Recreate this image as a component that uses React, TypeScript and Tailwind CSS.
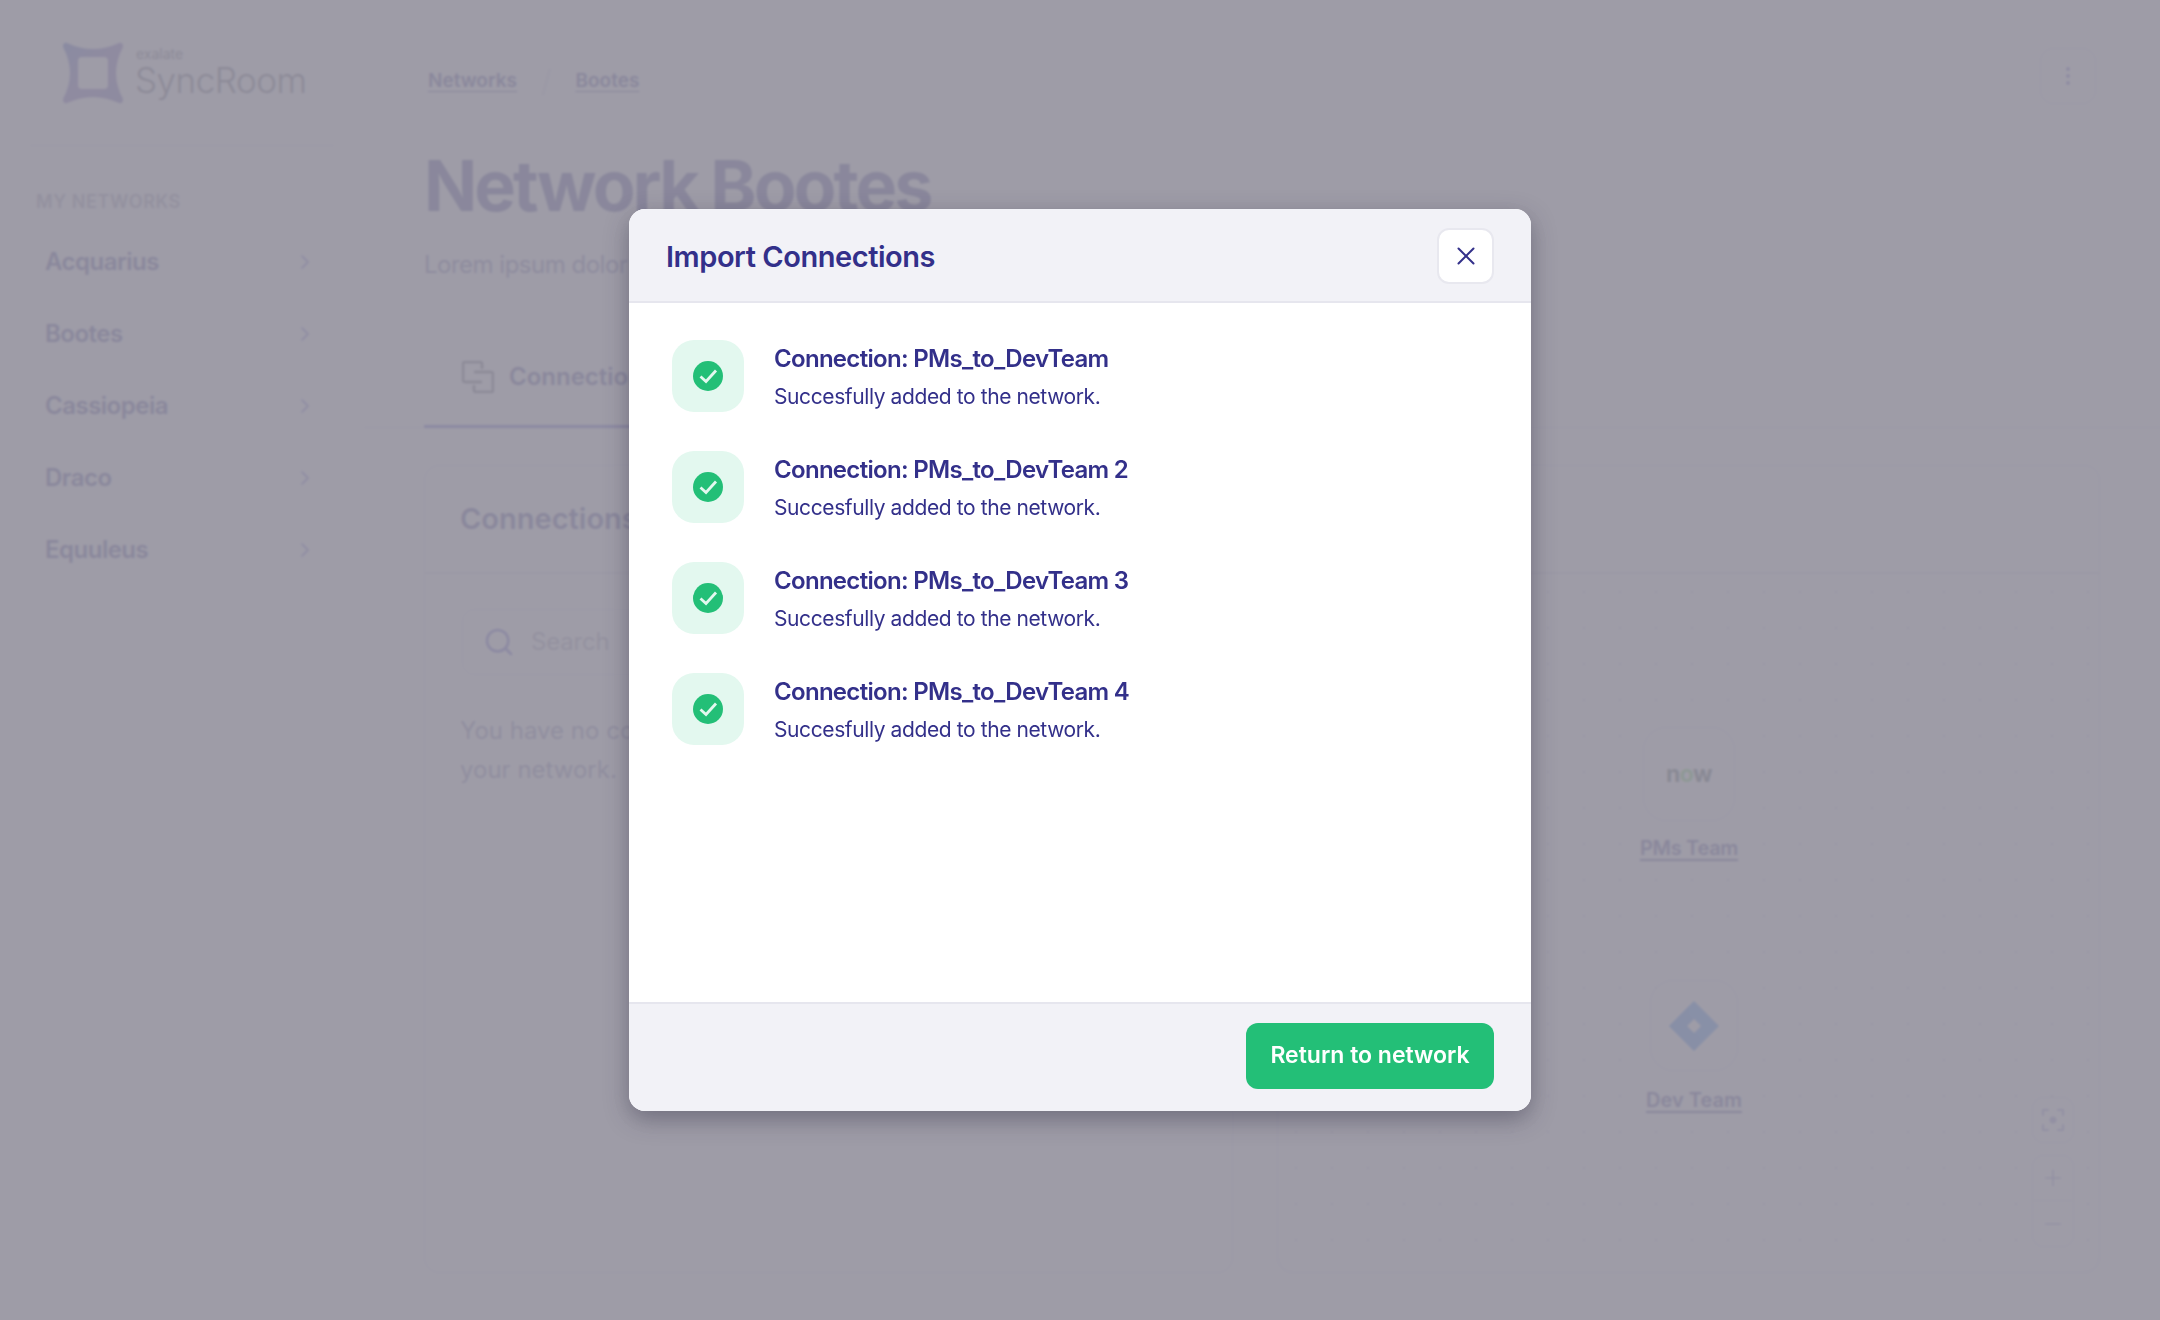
import { ChevronRight, MoreVertical, Plus, Minus, Search, X } from 'lucide-react'

const networks = ['Acquarius', 'Bootes', 'Cassiopeia', 'Draco', 'Equuleus']
const imported = ['PMs_to_DevTeam', 'PMs_to_DevTeam 2', 'PMs_to_DevTeam 3', 'PMs_to_DevTeam 4']

function Logo() {
  return (
    <div className="flex items-center gap-[12px] ml-[27px]">
      <svg width="60" height="62" viewBox="0 0 60 62" fill="none">
        <defs>
          <linearGradient id="logoFill" x1="0" y1="0" x2="1" y2="1">
            <stop offset="0" stopColor="#3654c0" />
            <stop offset="0.5" stopColor="#6a50b8" />
            <stop offset="1" stopColor="#5a4fb0" />
          </linearGradient>
        </defs>
        <path
          d="M4 1 Q30 13 56 1 Q60 0 60 5 Q46 31 60 57 Q60 62 56 61 Q30 49 4 61 Q0 62 0 57 Q14 31 0 5 Q0 0 4 1 Z M19 15 Q15 15 15 19 L15 43 Q15 47 19 47 L41 47 Q45 47 45 43 L45 19 Q45 15 41 15 Z"
          fill="url(#logoFill)"
          fillRule="evenodd"
        />
      </svg>
      <div className="flex flex-col text-[#4a4a5e]">
        <span className="text-[14px] leading-[14px] ml-[1px]">exalate</span>
        <span className="text-[35px] leading-[38px] font-light tracking-[-0.5px]">SyncRoom</span>
      </div>
    </div>
  )
}

function Sidebar() {
  return (
    <aside className="w-[364px] shrink-0 px-[36px] pt-[42px]">
      <Logo />
      <div className="h-px bg-[#e6e6f2] mt-[41px] -mr-[6px] -ml-[6px]" />
      <p className="mt-[45px] text-[18px] leading-[22px] font-semibold tracking-[0.6px] text-[#8f8ca8]">MY NETWORKS</p>
      <ul className="mt-[13px]">
        {networks.map((n) => (
          <li key={n} className="h-[72px] flex items-center justify-between pl-[9px] pr-[11px]">
            <span className="text-[24px] font-semibold text-[#33308a] tracking-[-0.5px]">{n}</span>
            <ChevronRight size={24} strokeWidth={1.5} className="text-[#4c48c8]" />
          </li>
        ))}
      </ul>
    </aside>
  )
}

function Graph() {
  return (
    <div className="relative flex-1 border border-[#dcdbea] rounded-b-[16px] bg-[radial-gradient(#c9c7de_1.5px,transparent_1.5px)] bg-[length:36px_36px]">
      {/* nodes sit on a free canvas */}
      <div className="absolute left-[364px] top-[153px] w-[94px] flex flex-col items-center">
        <div className="w-[92px] h-[94px] rounded-[24px] border border-[#dcdbea] bg-white flex items-center justify-center">
          <span className="text-[23px] font-bold text-[#293e40] tracking-[-0.5px]">
            n<span className="text-[#62d84e]">o</span>w
          </span>
        </div>
        <span className="mt-[12px] text-[20px] tracking-[-0.3px] whitespace-nowrap font-semibold text-[#33308a] underline underline-offset-4">PMs Team</span>
      </div>
      <div className="absolute left-[371px] top-[406px] w-[90px] flex flex-col items-center">
        <div className="w-[88px] h-[91px] rounded-[24px] border border-[#dcdbea] bg-white flex items-center justify-center">
          <svg width="50" height="50" viewBox="0 0 50 50">
            <path d="M25 0 L50 25 L25 50 L0 25 Z M25 18 L18 25 L25 32 L32 25 Z" fill="#2684ff" fillRule="evenodd" />
            <path d="M25 0 L0 25 L25 50 Q38 38 25 32 L18 25 L25 18 Q14 12 25 0 Z" fill="#1a6fe0" opacity="0.5" />
          </svg>
        </div>
        <span className="mt-[14px] text-[20px] whitespace-nowrap font-semibold text-[#33308a] underline underline-offset-4">Dev Team</span>
      </div>
      {/* canvas controls */}
      <div className="absolute right-[25px] top-[523px] flex flex-col gap-[12px] w-[42px]">
        <div className="h-[46px] rounded-[12px] border border-[#dcdbea] bg-white flex items-center justify-center">
          <svg width="22" height="22" viewBox="0 0 22 22" fill="none" stroke="#8b88d0" strokeWidth="2">
            <path d="M1 7V1H7M15 1H21V7M21 15V21H15M7 21H1V15" />
            <circle cx="11" cy="11" r="3.5" fill="#8b88d0" stroke="none" />
          </svg>
        </div>
        <div className="h-[92px] rounded-[12px] border border-[#dcdbea] bg-white flex flex-col">
          <div className="h-[46px] flex items-center justify-center border-b border-[#dcdbea]">
            <Plus size={26} strokeWidth={1.5} className="text-[#8b88d0]" />
          </div>
          <div className="h-[46px] flex items-center justify-center">
            <Minus size={26} strokeWidth={1.5} className="text-[#8b88d0]" />
          </div>
        </div>
      </div>
    </div>
  )
}

function Page() {
  return (
    <div className="flex h-[1320px] bg-[#fafafd] text-[#33308a] font-['Inter',sans-serif]">
      <Sidebar />
      <main className="flex-1 flex flex-col min-w-0">
        <div className="flex items-center justify-between h-[56px] mt-[48px] pl-[64px] pr-[64px]">
          <div className="flex items-center gap-[24px] pt-[10px] text-[19px] font-semibold">
            <span className="underline underline-offset-4">Networks</span>
            <span className="text-[#d6d6e6] font-light text-[30px]">/</span>
            <span className="underline underline-offset-4">Bootes</span>
          </div>
          <div className="w-[56px] h-[56px] rounded-[14px] border border-[#dcdbea] bg-white flex items-center justify-center">
            <MoreVertical size={24} strokeWidth={2} className="text-[#5b57c8]" />
          </div>
        </div>
        <h1 className="ml-[60px] mt-[40px] text-[70px] leading-[84px] font-bold tracking-[-3px]">Network Bootes</h1>
        <p className="ml-[60px] mt-[21px] text-[24px] leading-[32px] tracking-[-0.5px] text-[#5c5a9e]">Lorem ipsum dolor</p>
        <div className="mt-[48px] border-b border-[#e6e6f2] h-[99px]">
          <div className="ml-[60px] w-[300px] h-[99px] -mb-px border-b-[3px] border-[#4c48c8] flex items-center gap-[15px] pl-[38px]">
            <svg width="32" height="32" viewBox="0 0 32 32" fill="none" stroke="#4a4a5e" strokeWidth="2.5" strokeLinejoin="round">
              <path d="M20 21H3a2 2 0 0 1-2-2V3a2 2 0 0 1 2-2h15a2 2 0 0 1 2 2v5" />
              <path d="M12 11h17a2 2 0 0 1 2 2v16a2 2 0 0 1-2 2H14a2 2 0 0 1-2-2v-5" />
            </svg>
            <span className="text-[24px] font-semibold text-[#33308a]">Connections</span>
          </div>
        </div>
        <div className="ml-[60px] mr-[60px] mt-[37px] h-[108px] border border-[#dcdbea] rounded-t-[16px] bg-white flex items-center pl-[35px]">
          <h2 className="text-[29px] font-semibold">Connections</h2>
        </div>
        <div className="ml-[60px] mr-[60px] h-[700px] flex gap-[44px]">
          <section className="w-[809px] border border-[#dcdbea] rounded-b-[16px] bg-white px-[37px] pt-[35px]">
            <div className="h-[66px] rounded-[12px] border border-[#dcdbea] flex items-center gap-[16px] pl-[20px]">
              <Search size={32} strokeWidth={2} className="text-[#4c48c8]" />
              <span className="text-[24px] tracking-[-0.2px] text-[#8f8ca8]">Search</span>
            </div>
            <p className="mt-[36px] -ml-[2px] text-[24px] leading-[39px] text-[#6e6ca5]">
              You have no connections yet. Add one to
              <br />
              your network.
            </p>
          </section>
          <Graph />
        </div>
      </main>
    </div>
  )
}

function CheckBadge() {
  return (
    <div className="w-[72px] h-[72px] rounded-[22px] bg-[#e3f8ef] flex items-center justify-center shrink-0">
      <svg width="30" height="30" viewBox="0 0 30 30">
        <circle cx="15" cy="15" r="15" fill="#23bf77" />
        <path d="M7.5 15.5 L13 20.5 L23 9.5" fill="none" stroke="#e3f8ef" strokeWidth="2.8" />
      </svg>
    </div>
  )
}

function ImportModal() {
  return (
    <div className="absolute inset-0 bg-[#94919d]/90 backdrop-blur-[1px] flex items-center justify-center">
      <div className="w-[902px] h-[902px] rounded-[16px] overflow-hidden bg-white flex flex-col shadow-[0_8px_24px_rgba(40,38,60,0.4)] text-[#33308a] font-['Inter',sans-serif]">
        <header className="h-[94px] shrink-0 bg-[#f2f2f7] border-b-2 border-[#e6e6ee] flex items-center justify-between pl-[37px] pr-[37px] pt-[2px]">
          <h2 className="text-[29px] font-semibold tracking-[-0.45px] mt-[2px]">Import Connections</h2>
          <button className="w-[57px] h-[56px] rounded-[12px] bg-white border-2 border-[#e8e8ef] flex items-center justify-center">
            <X size={30} strokeWidth={1.6} className="text-[#33308a]" />
          </button>
        </header>
        <div className="flex-1 pt-[37px] pl-[43px] flex flex-col gap-[39px]">
          {imported.map((name) => (
            <div key={name} className="flex items-center gap-[30px]">
              <CheckBadge />
              <div>
                <p className="text-[24px] leading-[34px] font-semibold tracking-[-0.7px] mt-[2px]">Connection: {name}</p>
                <p className="mt-[6px] text-[21px] leading-[30px] tracking-[-0.4px]">Succesfully added to the network.</p>
              </div>
            </div>
          ))}
        </div>
        <footer className="h-[109px] shrink-0 bg-[#f2f2f7] border-t-2 border-[#e6e6ee] flex items-center justify-end pr-[37px] pb-[4px]">
          <button className="w-[248px] h-[66px] rounded-[12px] bg-[#23bf77] text-white text-[23px] font-semibold">
            Return to network
          </button>
        </footer>
      </div>
    </div>
  )
}

export default function App() {
  return (
    <div className="relative h-[1320px] overflow-hidden">
      <Page />
      <ImportModal />
    </div>
  )
}
